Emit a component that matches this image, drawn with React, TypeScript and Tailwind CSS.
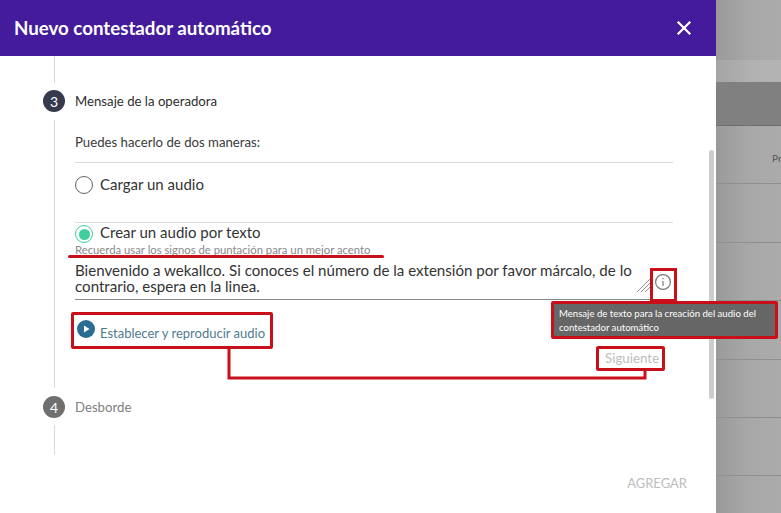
import React from "react";

function Step({ n, active, label }: { n: number; active: boolean; label: string }) {
  return (
    <div className="flex items-center h-[22px]">
      <div className={`w-[22px] h-[22px] rounded-full flex items-center justify-center text-white text-[14px] ${active ? "bg-[#363a4d]" : "bg-[#6f6f6f]"}`}>{n}</div>
      <span className={`ml-[10px] pt-[2px] text-[13.2px] ${active ? "text-[#2e2e2e]" : "text-[#808080]"}`}>{label}</span>
    </div>
  );
}

function Line({ className }: { className: string }) {
  return <div className={`w-px ml-[10.5px] bg-[#d9d9d9] ${className}`} />;
}

function Row({ top, children }: { top?: boolean; children?: React.ReactNode }) {
  return <div className={`h-[58.4px] border-b border-[#8f8f8f] text-[10px] text-[#555] ${top ? "pt-[25px] pl-[56px]" : ""}`}>{children}</div>;
}

export default function App() {
  return (
    <div className="relative w-[781px] h-[513px] overflow-hidden flex bg-[#a8a8a8] font-['Lato','Noto_Sans',sans-serif]">
      <div className="w-[716px] h-full bg-white flex flex-col shrink-0 z-10">
        <header className="h-14 shrink-0 bg-[#431b9b] flex items-center justify-between pl-[14px] pr-[24px] text-white">
          <h1 className="text-[18.7px] font-bold">Nuevo contestador automático</h1>
          <svg width="16" height="16" viewBox="0 0 16 16" stroke="white" strokeWidth="2.2" strokeLinecap="square"><path d="M2.5 2.5 13.5 13.5M13.5 2.5 2.5 13.5" /></svg>
        </header>
        <div className="relative flex-1 flex flex-col pl-[43px]">
          <Line className="h-[27px]" />
          <div className="h-[7px]" />
          <Step n={3} active label="Mensaje de la operadora" />
          <div className="flex h-[284px] pt-2">
            <Line className="h-[268px]" />
            <div className="ml-[20.5px] w-[598px] flex flex-col">
              <div className="h-[43px] border-b border-[#dcdcdc] flex items-center text-[13.2px] text-[#3a3a3a] pt-[3px]">Puedes hacerlo de dos maneras:</div>
              <label className="h-[60px] border-b border-[#dcdcdc] flex items-start pt-[13px] text-[15px] text-[#333]">
                <span className="w-[18px] h-[18px] rounded-full border border-[#666] mr-[7px]" />
                <span className="leading-[16px]">Cargar un audio</span>
              </label>
              <label className="flex items-center h-[18px] mt-[2px] text-[15px] text-[#333]">
                <span className="w-[18px] h-[18px] rounded-full border border-[#3ecf9c] mr-[7px] flex items-center justify-center">
                  <span className="w-[11px] h-[11px] rounded-full bg-[#3ecf9c]" />
                </span>
                <span className="-mt-[3px]">Crear un audio por texto</span>
              </label>
              <p className="text-[11.3px] leading-[14px] text-[#8a8a8a]">Recuerda usar los signos de puntación para un mejor acento</p>
              <div className="relative h-[43px] border-b border-[#8a8a8a] pt-[5px] text-[15.1px] leading-[16px] text-[#333]">
                Bienvenido a wekallco. Si conoces el número de la extensión por favor márcalo, de lo contrario, espera en la linea.
                <svg className="absolute left-[562px] top-[21px]" width="14" height="15" viewBox="0 0 14 15" stroke="#777" strokeWidth="0.8" fill="none"><path d="M0 14 13 1M4 14 13 5M8 14 13 9" /></svg>
                <svg className="absolute left-[579px] top-[16px]" width="18" height="18" viewBox="0 0 18 18" fill="none" stroke="#7a7a7a" strokeWidth="1.2"><circle cx="9" cy="9" r="7.4" /><path d="M9 8v5" /><path d="M9 5v1.3" /></svg>
              </div>
              <div className="flex items-start mt-[20px] pl-[2px]">
                <svg width="18" height="18" viewBox="0 0 18 18"><circle cx="9" cy="9" r="9" fill="#2b6d92" /><path d="M7 5.5 12.5 9 7 12.5Z" fill="white" /></svg>
                <span className="ml-[5px] mt-[5px] text-[13px] leading-[16px] text-[#4f7a90]">Establecer y reproducir audio</span>
              </div>
              <div className="flex justify-end pr-[14px] mt-[8px] text-[13.3px] leading-[18px] text-[#bdbdbd]">Siguiente</div>
            </div>
          </div>
          <Step n={4} active={false} label="Desborde" />
          <div className="h-[7px]" />
          <Line className="h-[29px]" />
          <div className="flex justify-end pr-[29px] pt-[20px] text-[13px] leading-[18px] text-[#bdbdbd]">AGREGAR</div>
          <div className="absolute left-[709px] top-[94px] w-[5px] h-[249px] rounded-full bg-[#cdcdcd]" />
        </div>
      </div>

      <div className="flex-1 flex flex-col bg-gradient-to-r from-[#9a9a9a] via-[#a8a8a8] to-[#ababab]">
        <div className="h-[60px]" />
        <div className="h-[22px] bg-white/10" />
        <div className="h-[44px] bg-[#808080] border-b border-[#6f6f6f]" />
        <Row top>Pr</Row>
        <Row />
        <Row />
        <Row />
        <Row />
        <Row />
      </div>

      {/* tooltip */}
      <div className="absolute z-20 left-[551px] top-[301px] w-[227px] h-[38px] bg-[#666666] border-[3px] border-[#c8101a] rounded-[2px] pl-[5px] text-[9.6px] leading-[14px] pt-[3px] text-white">
        Mensaje de texto para la creación del audio del contestador automático
      </div>

      {/* red annotations */}
      <div className="absolute z-20 left-[68px] top-[255px] w-[316px] h-[3px] bg-[#c8101a] rounded-full" />
      <div className="absolute z-20 left-[650px] top-[268px] w-[27px] h-[34px] border-[3px] border-[#c8101a]" />
      <div className="absolute z-20 left-[71px] top-[312px] w-[202px] h-[37px] border-[3px] border-[#c8101a] rounded-[2px]" />
      <div className="absolute z-20 left-[596px] top-[346px] w-[69px] h-[25px] border-[3px] border-[#c8101a] rounded-[2px]" />
      <svg className="absolute z-20 left-0 top-0 pointer-events-none" width="781" height="513" fill="none" stroke="#c8101a" strokeWidth="3">
        <path d="M229 349V378H645V370" />
      </svg>
    </div>
  );
}
